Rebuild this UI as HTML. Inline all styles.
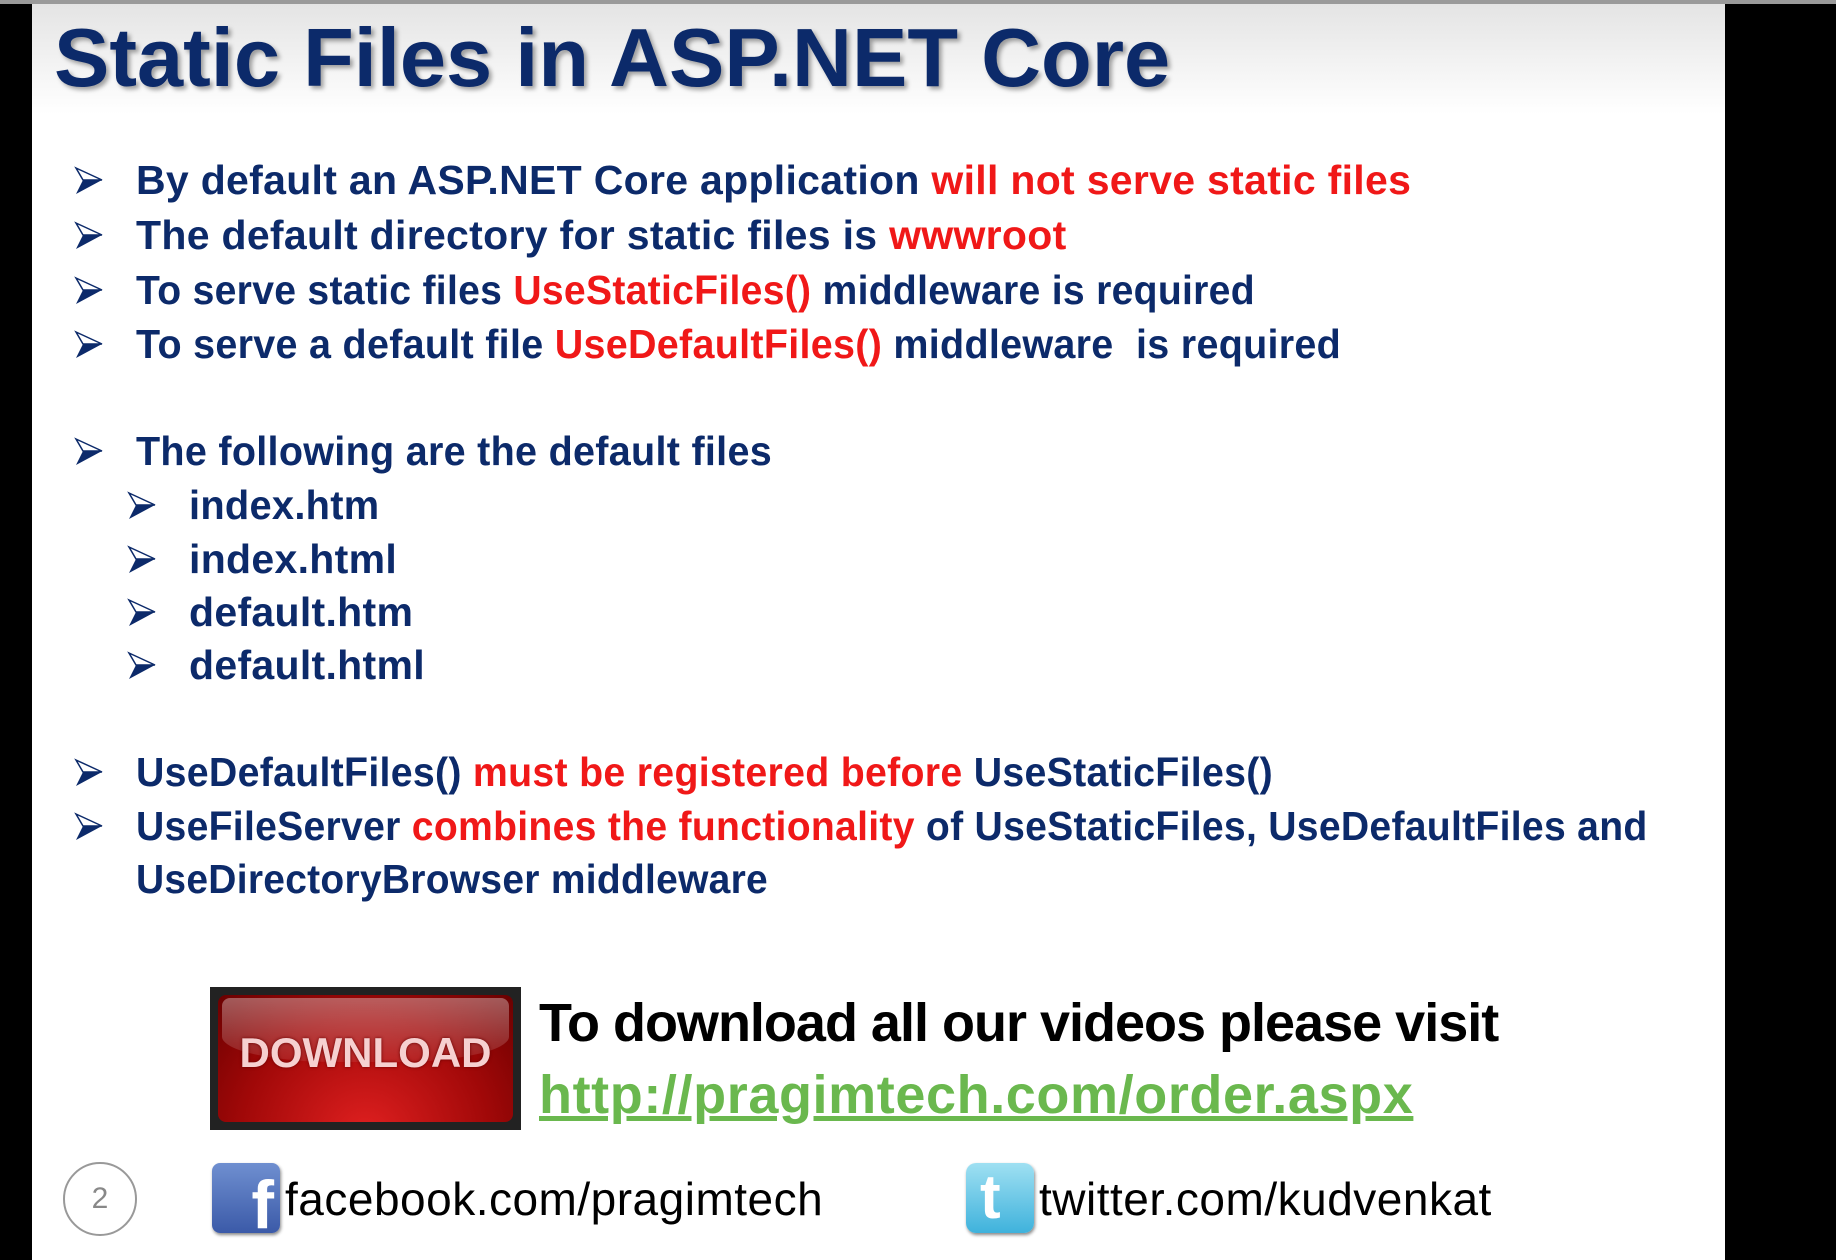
<!DOCTYPE html>
<html><head><meta charset="utf-8"><style>
body{margin:0;width:1836px;height:1260px;background:#000;overflow:hidden;position:relative;font-family:"Liberation Sans",sans-serif}
.slide{position:absolute;left:32px;top:4px;width:1693px;height:1256px;background:linear-gradient(#e4e4e4 0,#fff 110px,#fff 100%)}
.topline{position:absolute;left:0;top:0;width:1836px;height:4px;background:#9a9a9a}
.title{position:absolute;left:54px;top:10px;font-size:83px;font-weight:bold;color:#0c2a6a;letter-spacing:0px;text-shadow:3px 3px 4px rgba(0,0,0,.35);white-space:nowrap}
.l{position:absolute;height:48px;line-height:48px;font-size:41px;font-weight:bold;color:#0c2a6a;white-space:nowrap;letter-spacing:0.3px;transform-origin:0 50%}
.r{color:#f01818}
.ar{position:absolute;width:30px;height:30px}
.dl{position:absolute;left:210px;top:987px;width:311px;height:143px;background:#222;}
.dl div{position:absolute;left:8px;top:8px;right:8px;bottom:8px;border-radius:8px;background:radial-gradient(ellipse at 50% 110%,#e02020,#a00808 60%,#6a0000);}
.dl div:before{content:"";position:absolute;left:4px;right:4px;top:3px;height:50%;border-radius:8px 8px 40% 40%;background:linear-gradient(rgba(255,255,255,.35),rgba(255,255,255,.08))}
.dl span{position:absolute;left:0;right:0;top:42px;text-align:center;font-size:42px;font-weight:bold;color:#f6d0d0;letter-spacing:0px;text-shadow:0 0 3px #600}
.t{position:absolute;font-weight:bold;white-space:nowrap}
</style></head><body>
<div class="topline"></div>
<div class="slide"></div>
<div class="title">Static Files in ASP.NET Core</div>
<svg width="0" height="0" style="position:absolute"><defs><symbol id="a" viewBox="0 0 30 30"><path d="M2 2 L28 14 L2 28 L9 14 Z" fill="#0c2a6a"/><path d="M2 2 L28 14 L9 14 Z" fill="#fff" stroke="#0c2a6a" stroke-width="1.5"/></symbol></defs></svg>
<svg class="ar" style="left:74px;top:166px"><use href="#a"/></svg>
<svg class="ar" style="left:74px;top:221px"><use href="#a"/></svg>
<svg class="ar" style="left:74px;top:276px"><use href="#a"/></svg>
<svg class="ar" style="left:74px;top:330px"><use href="#a"/></svg>
<svg class="ar" style="left:74px;top:437px"><use href="#a"/></svg>
<svg class="ar" style="left:127px;top:491px"><use href="#a"/></svg>
<svg class="ar" style="left:127px;top:545px"><use href="#a"/></svg>
<svg class="ar" style="left:127px;top:598px"><use href="#a"/></svg>
<svg class="ar" style="left:127px;top:651px"><use href="#a"/></svg>
<svg class="ar" style="left:74px;top:758px"><use href="#a"/></svg>
<svg class="ar" style="left:74px;top:812px"><use href="#a"/></svg>
<div class="l" style="left:136px;top:156px">By default an ASP.NET Core application <span class="r">will not serve static files</span></div>
<div class="l" style="left:136px;top:211px">The default directory for static files is <span class="r">wwwroot</span></div>
<div class="l" style="left:136px;top:266px;transform:scaleX(.954)">To serve static files <span class="r">UseStaticFiles()</span> middleware is required</div>
<div class="l" style="left:136px;top:320px;transform:scaleX(.963)">To serve a default file <span class="r">UseDefaultFiles()</span> middleware &nbsp;is required</div>
<div class="l" style="left:136px;top:427px;transform:scaleX(.964)">The following are the default files</div>
<div class="l" style="left:189px;top:481px;transform:scaleX(.97)">index.htm</div>
<div class="l" style="left:189px;top:535px">index.html</div>
<div class="l" style="left:189px;top:588px">default.htm</div>
<div class="l" style="left:189px;top:641px">default.html</div>
<div class="l" style="left:136px;top:748px;transform:scaleX(.958)">UseDefaultFiles() <span class="r">must be registered before</span> UseStaticFiles()</div>
<div class="l" style="left:136px;top:802px;transform:scaleX(.954)">UseFileServer <span class="r">combines the functionality</span> of UseStaticFiles, UseDefaultFiles and</div>
<div class="l" style="left:136px;top:855px;transform:scaleX(.95)">UseDirectoryBrowser middleware</div>
<div class="dl"><div></div><span>DOWNLOAD</span></div>
<div class="t" style="left:539px;top:992px;font-size:54px;color:#000;letter-spacing:-1px">To download all our videos please visit</div>
<div class="t" style="left:539px;top:1064px;font-size:54px;color:#6ab84e;text-decoration:underline;letter-spacing:0.6px">http://pragimtech.com/order.aspx</div>
<div style="position:absolute;left:63px;top:1162px;width:74px;height:74px;border:2px solid #999;border-radius:50%;box-sizing:border-box;text-align:center;line-height:70px;font-size:30px;color:#888">2</div>
<div style="position:absolute;left:212px;top:1163px;width:68px;height:70px;border-radius:8px;background:linear-gradient(#6f8fd0,#3b5aa8);box-shadow:1px 2px 3px #888"><span style="position:absolute;right:6px;bottom:-6px;font-size:68px;font-weight:bold;color:#fff;line-height:1">f</span></div>
<div class="t" style="left:285px;top:1172px;font-size:46px;font-weight:normal;color:#000;letter-spacing:0.5px">facebook.com/pragimtech</div>
<div style="position:absolute;left:966px;top:1163px;width:68px;height:70px;border-radius:10px;background:linear-gradient(#9fe0f2,#3fb2dc);box-shadow:1px 2px 3px #888"><span style="position:absolute;left:14px;top:4px;font-size:62px;font-weight:bold;color:#fff;line-height:1">t</span></div>
<div class="t" style="left:1039px;top:1172px;font-size:46px;font-weight:normal;color:#000;letter-spacing:0.5px">twitter.com/kudvenkat</div>
</body></html>
